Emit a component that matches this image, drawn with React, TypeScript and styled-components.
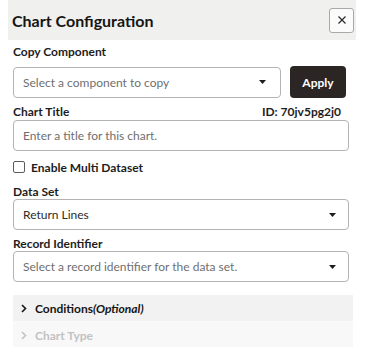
import * as React from 'react'
import styled, { createGlobalStyle } from 'styled-components'

const GlobalStyle = createGlobalStyle`
  body {
    margin: 0;
    background: #fff;
    font-family: Lato, "Open Sans", sans-serif;
    color: #1d1d1d;
  }
`

const Panel = styled.div`
  width: 366px;
  height: 347px;
  overflow: hidden;
`

const Header = styled.div`
  margin-left: 8px;
  width: 348px;
  height: 40px;
  background: #f0f0ef;
  display: flex;
  align-items: center;
  justify-content: space-between;
  padding: 0 2px 0 4px;
  box-sizing: border-box;
`

const Title = styled.h1`
  margin: 0;
  font-size: 16px;
  font-weight: 700;
  color: #161513;
`

const CloseButton = styled.button`
  width: 25px;
  height: 25px;
  border: 1px solid #a9a9a9;
  border-radius: 3px;
  background: #fbfbfb;
  display: flex;
  align-items: center;
  justify-content: center;
  padding: 0;
`

const Body = styled.div`
  padding: 0 17px 0 13px;
  display: flex;
  flex-direction: column;
`

const Field = styled.div<{ $top: number }>`
  display: flex;
  flex-direction: column;
  margin-top: ${p => p.$top}px;
`

const LabelRow = styled.div<{ $gap: number }>`
  display: flex;
  justify-content: space-between;
  height: 14px;
  line-height: 14px;
  margin-bottom: ${p => p.$gap}px;
  padding-right: 8px;
`

const Label = styled.label`
  font-size: 12px;
  font-weight: 700;
  color: #1d1d1d;
`

const IdText = styled.span`
  font-size: 12px;
  font-weight: 700;
  color: #1d1d1d;
`

const Row = styled.div`
  display: flex;
  gap: 9px;
  align-items: center;
`

const Box = styled.div<{ $placeholder?: boolean }>`
  flex: 1 1 auto;
  height: 31px;
  border: 1px solid #b3b3b3;
  border-radius: 4px;
  box-sizing: border-box;
  display: flex;
  align-items: center;
  justify-content: space-between;
  padding: 0 12px 0 9px;
  font-size: 12px;
  color: ${p => (p.$placeholder ? '#6f6f6f' : '#2b2b2b')};
  background: #fff;
`

const ApplyButton = styled.button`
  width: 56px;
  height: 32px;
  margin-right: 3px;
  border: none;
  border-radius: 4px;
  background: #2b2624;
  color: #fff;
  font-family: Lato, sans-serif;
  font-size: 12px;
  font-weight: 700;
`

const CheckRow = styled.label`
  display: flex;
  align-items: center;
  gap: 6px;
  height: 12px;
  margin-top: 10px;
  font-size: 12px;
  font-weight: 700;
`

const CheckBox = styled.span`
  width: 10px;
  height: 10px;
  border: 1px solid #5c5c5c;
  border-radius: 2px;
  background: #fff;
`

const Accordion = styled.div`
  margin-top: 13px;
  margin-right: -4px;
  display: flex;
  flex-direction: column;
`

const AccordionItem = styled.div<{ $faded?: boolean }>`
  height: 26px;
  display: flex;
  align-items: center;
  gap: 8px;
  padding-left: 8px;
  background: ${p => (p.$faded ? '#f8f8f8' : '#f2f2f2')};
  border-top: ${p => (p.$faded ? '1px solid #fafafa' : 'none')};
  color: ${p => (p.$faded ? '#c2c2c2' : '#161513')};
  font-size: 12px;
  font-weight: 700;
`

const Optional = styled.i`
  font-weight: 700;
`

const Caret = () => (
  <svg width="7" height="4" viewBox="0 0 7 4">
    <path d="M0 0h7L3.5 4z" fill="#1d1d1d" />
  </svg>
)

const Chevron = ({ color }: { color: string }) => (
  <svg width="6" height="9" viewBox="0 0 6 9">
    <path d="M1 1l3.5 3.5L1 8" fill="none" stroke={color} strokeWidth="1.6" />
  </svg>
)

const App: React.FC = () => (
  <Panel>
    <GlobalStyle />
    <Header>
      <Title>Chart Configuration</Title>
      <CloseButton aria-label="Close">
        <svg width="8" height="8" viewBox="0 0 8 8">
          <path d="M0.5 0.5l7 7M7.5 0.5l-7 7" stroke="#2a2a2a" strokeWidth="1.2" />
        </svg>
      </CloseButton>
    </Header>
    <Body>
      <Field $top={5}>
        <LabelRow $gap={7}><Label>Copy Component</Label></LabelRow>
        <Row>
          <Box $placeholder style={{ paddingRight: 14 }}>
            Select a component to copy
            <Caret />
          </Box>
          <ApplyButton>Apply</ApplyButton>
        </Row>
      </Field>
      <Field $top={7}>
        <LabelRow $gap={1}>
          <Label>Chart Title</Label>
          <IdText>ID: 70jv5pg2j0</IdText>
        </LabelRow>
        <Box $placeholder>Enter a title for this chart.</Box>
      </Field>
      <CheckRow>
        <CheckBox />
        Enable Multi Dataset
      </CheckRow>
      <Field $top={12}>
        <LabelRow $gap={0}><Label>Data Set</Label></LabelRow>
        <Box>
          Return Lines
          <Caret />
        </Box>
      </Field>
      <Field $top={7}>
        <LabelRow $gap={0}><Label>Record Identifier</Label></LabelRow>
        <Box $placeholder>
          Select a record identifier for the data set.
          <Caret />
        </Box>
      </Field>
      <Accordion>
        <AccordionItem>
          <Chevron color="#161513" />
          <span>Conditions<Optional>(Optional)</Optional></span>
        </AccordionItem>
        <AccordionItem $faded>
          <Chevron color="#c2c2c2" />
          <span>Chart Type</span>
        </AccordionItem>
      </Accordion>
    </Body>
  </Panel>
)

export default App
